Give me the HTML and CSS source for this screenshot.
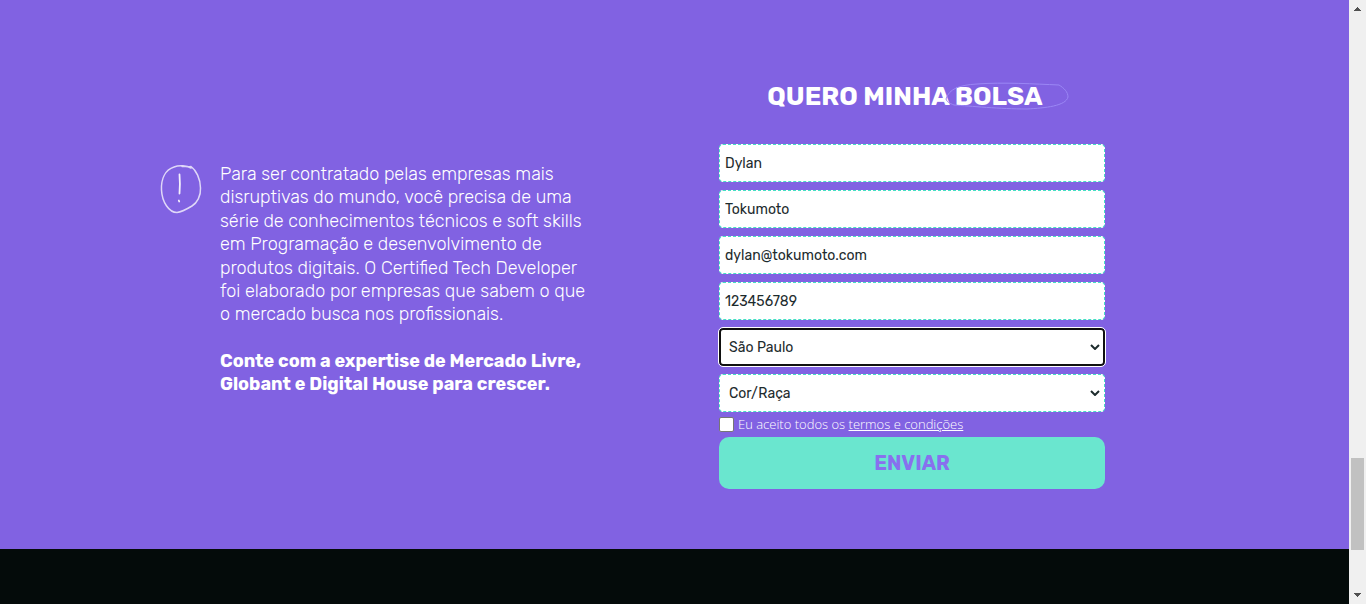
FILE: index.html
```html
<!DOCTYPE html>
<html lang="pt-BR">
<head>
<meta charset="utf-8">
<meta name="viewport" content="width=device-width, initial-scale=1">
<title>Quero minha bolsa</title>
<link rel="stylesheet" href="styles.css">
</head>
<body>
<div class="page">
  <main class="scholarship">
    <div class="container">
      <section class="pitch">
        <svg class="pitch-icon" viewBox="0 0 42 50" width="42" height="50" fill="none" stroke="#fff" stroke-linecap="round" aria-hidden="true">
          <path stroke-width="1.5" opacity=".75" d="M31 4C27 1.500 19 1 14 3C5 6 1 15 1.500 26C2 38 9 48.500 17 48.500C22 48 27 45 32 42C37 39 41 32 40.500 24C40.500 15 36 6 31 2.500C28 3.500 25 2 22 2.500"/>
          <path stroke-width="1.8" opacity=".9" d="M19.500 10.500C20 16 20 23 19.500 29.500M18.800 36.500L19.200 37.500"/>
        </svg>
        <div class="pitch-text">
          <p>Para ser contratado pelas empresas mais disruptivas do mundo, você precisa de uma série de conhecimentos técnicos e soft skills em Programação e desenvolvimento de produtos digitais. O Certified Tech Developer foi elaborado por empresas que sabem o que o mercado busca nos profissionais.</p>
          <p class="pitch-strong">Conte com a expertise de Mercado Livre, Globant e Digital House para crescer.</p>
        </div>
      </section>
      <form class="form">
        <h2 class="title">QUERO MINHA <span class="circled">BOLSA<svg class="scribble" viewBox="0 0 124 28" width="124" height="28" fill="none" stroke="#9b87f5" aria-hidden="true"><path d="M1 17C4 7 14 3 32 2C58 0 90 2 114 3C119 6 123 10 123 15C121 24 100 26 82 27C55 27 25 24 9 23C4 21 2 20 1 17Z"/></svg></span></h2>
        <div class="fields">
          <input class="field" type="text" aria-label="Nome" value="Dylan">
          <input class="field" type="text" aria-label="Sobrenome" value="Tokumoto">
          <input class="field" type="email" aria-label="E-mail" value="dylan@tokumoto.com">
          <input class="field" type="tel" aria-label="Telefone" value="123456789">
          <div class="picker">
            <select class="field select active" aria-label="Estado"><option>São Paulo</option></select>
            <svg class="chevron" viewBox="0 0 10 6" width="10" height="6" aria-hidden="true"><path d="M1 1l4 4 4-4"/></svg>
          </div>
          <div class="picker">
            <select class="field select" aria-label="Cor/Raça"><option>Cor/Raça</option></select>
            <svg class="chevron" viewBox="0 0 10 6" width="10" height="6" aria-hidden="true"><path d="M1 1l4 4 4-4"/></svg>
          </div>
        </div>
        <div class="terms">
          <input class="check" type="checkbox" id="terms">
          <label for="terms">Eu aceito todos os <a href="#termos">termos e condições</a></label>
        </div>
        <button class="submit" type="submit">ENVIAR</button>
      </form>
    </div>
  </main>
  <footer class="footer"></footer>
</div>
<div class="scrollbar" aria-hidden="true">
  <svg viewBox="0 0 7 4" width="7" height="4"><path d="M3 0h1v1h1v1h1v1h1v1H0V3h1V2h1V1h1z"/></svg>
  <div class="track"><div class="thumb"></div></div>
  <svg viewBox="0 0 7 4" width="7" height="4"><path d="M0 0h7v1H6v1H5v1H4v1H3V3H2V2H1V1H0z"/></svg>
</div>
</body>
</html>
```
FILE: styles.css
```css
* { box-sizing: border-box; }

body {
  margin: 0;
  display: flex;
  min-height: 100vh;
  font-family: Rubik, Roboto, sans-serif;
  color: #fff;
}

.page {
  flex: 1;
  display: flex;
  flex-direction: column;
  background: #040b0a;
}

.scholarship {
  padding: 81px 16px 60px;
  background: #8162e2;
}

.footer { flex: 1; }

.container {
  display: flex;
  justify-content: space-between;
  gap: 32px;
  max-width: 1029px;
  margin: 0 auto;
  padding-right: 84px;
}

.pitch {
  display: flex;
  align-items: flex-start;
  gap: 18px;
  padding-top: 82px;
}

.pitch-icon {
  flex: none;
  margin-top: 1px;
}

.pitch-text {
  max-width: 376px;
  font-size: 18px;
  font-weight: 300;
  line-height: 1.3;
}

.pitch-text p { margin: 0; }

.pitch-text .pitch-strong {
  margin-top: 23px;
  font-weight: 700;
}

.form {
  flex: 0 1 386px;
  display: flex;
  flex-direction: column;
}

.title {
  margin: 0 0 31px;
  padding-right: 14px;
  font-size: 26px;
  font-weight: 700;
  line-height: 32px;
  text-align: center;
}

.circled { position: relative; }

.scribble {
  position: absolute;
  left: -10px;
  top: 1px;
}

.fields {
  display: grid;
  gap: 8px;
}

.field {
  width: 100%;
  height: 38px;
  padding: 0 5px;
  border: 1px dashed #45e0c4;
  border-radius: 4px;
  background: #fff;
  color: #1d2b2d;
  font: 400 14px Rubik, Roboto, sans-serif;
}

.picker {
  position: relative;
  display: flex;
}

.select {
  appearance: none;
  padding: 0 24px 0 9px;
}

.active {
  border: 2px solid #101010;
  padding-left: 8px;
  outline: 1px solid #fff;
}

.chevron {
  position: absolute;
  right: 5px;
  top: 16px;
  fill: none;
  stroke: #1d2b2d;
  stroke-width: 2;
  pointer-events: none;
}

.terms {
  display: flex;
  align-items: center;
  gap: 4px;
  height: 25px;
  padding-bottom: 1px;
  font: 300 13px "Open Sans", sans-serif;
}

.terms a { color: inherit; }

.check {
  appearance: none;
  width: 15px;
  height: 15px;
  margin: 0;
  border: 1px solid #767676;
  border-radius: 2px;
  background: #fff;
}

.submit {
  height: 52px;
  border: 0;
  border-radius: 10px;
  background: #6ae6cf;
  color: #8870ee;
  font: 700 20px Rubik, Roboto, sans-serif;
}

.scrollbar {
  flex: none;
  display: flex;
  flex-direction: column;
  align-items: center;
  width: 17px;
  padding: 7px 0;
  background: #f0f0f0;
  fill: #505050;
}

.track {
  flex: 1;
  display: flex;
  flex-direction: column;
  justify-content: flex-end;
  padding-bottom: 43px;
}

.thumb {
  width: 13px;
  height: 92px;
  background: #c1c1c1;
}
```
